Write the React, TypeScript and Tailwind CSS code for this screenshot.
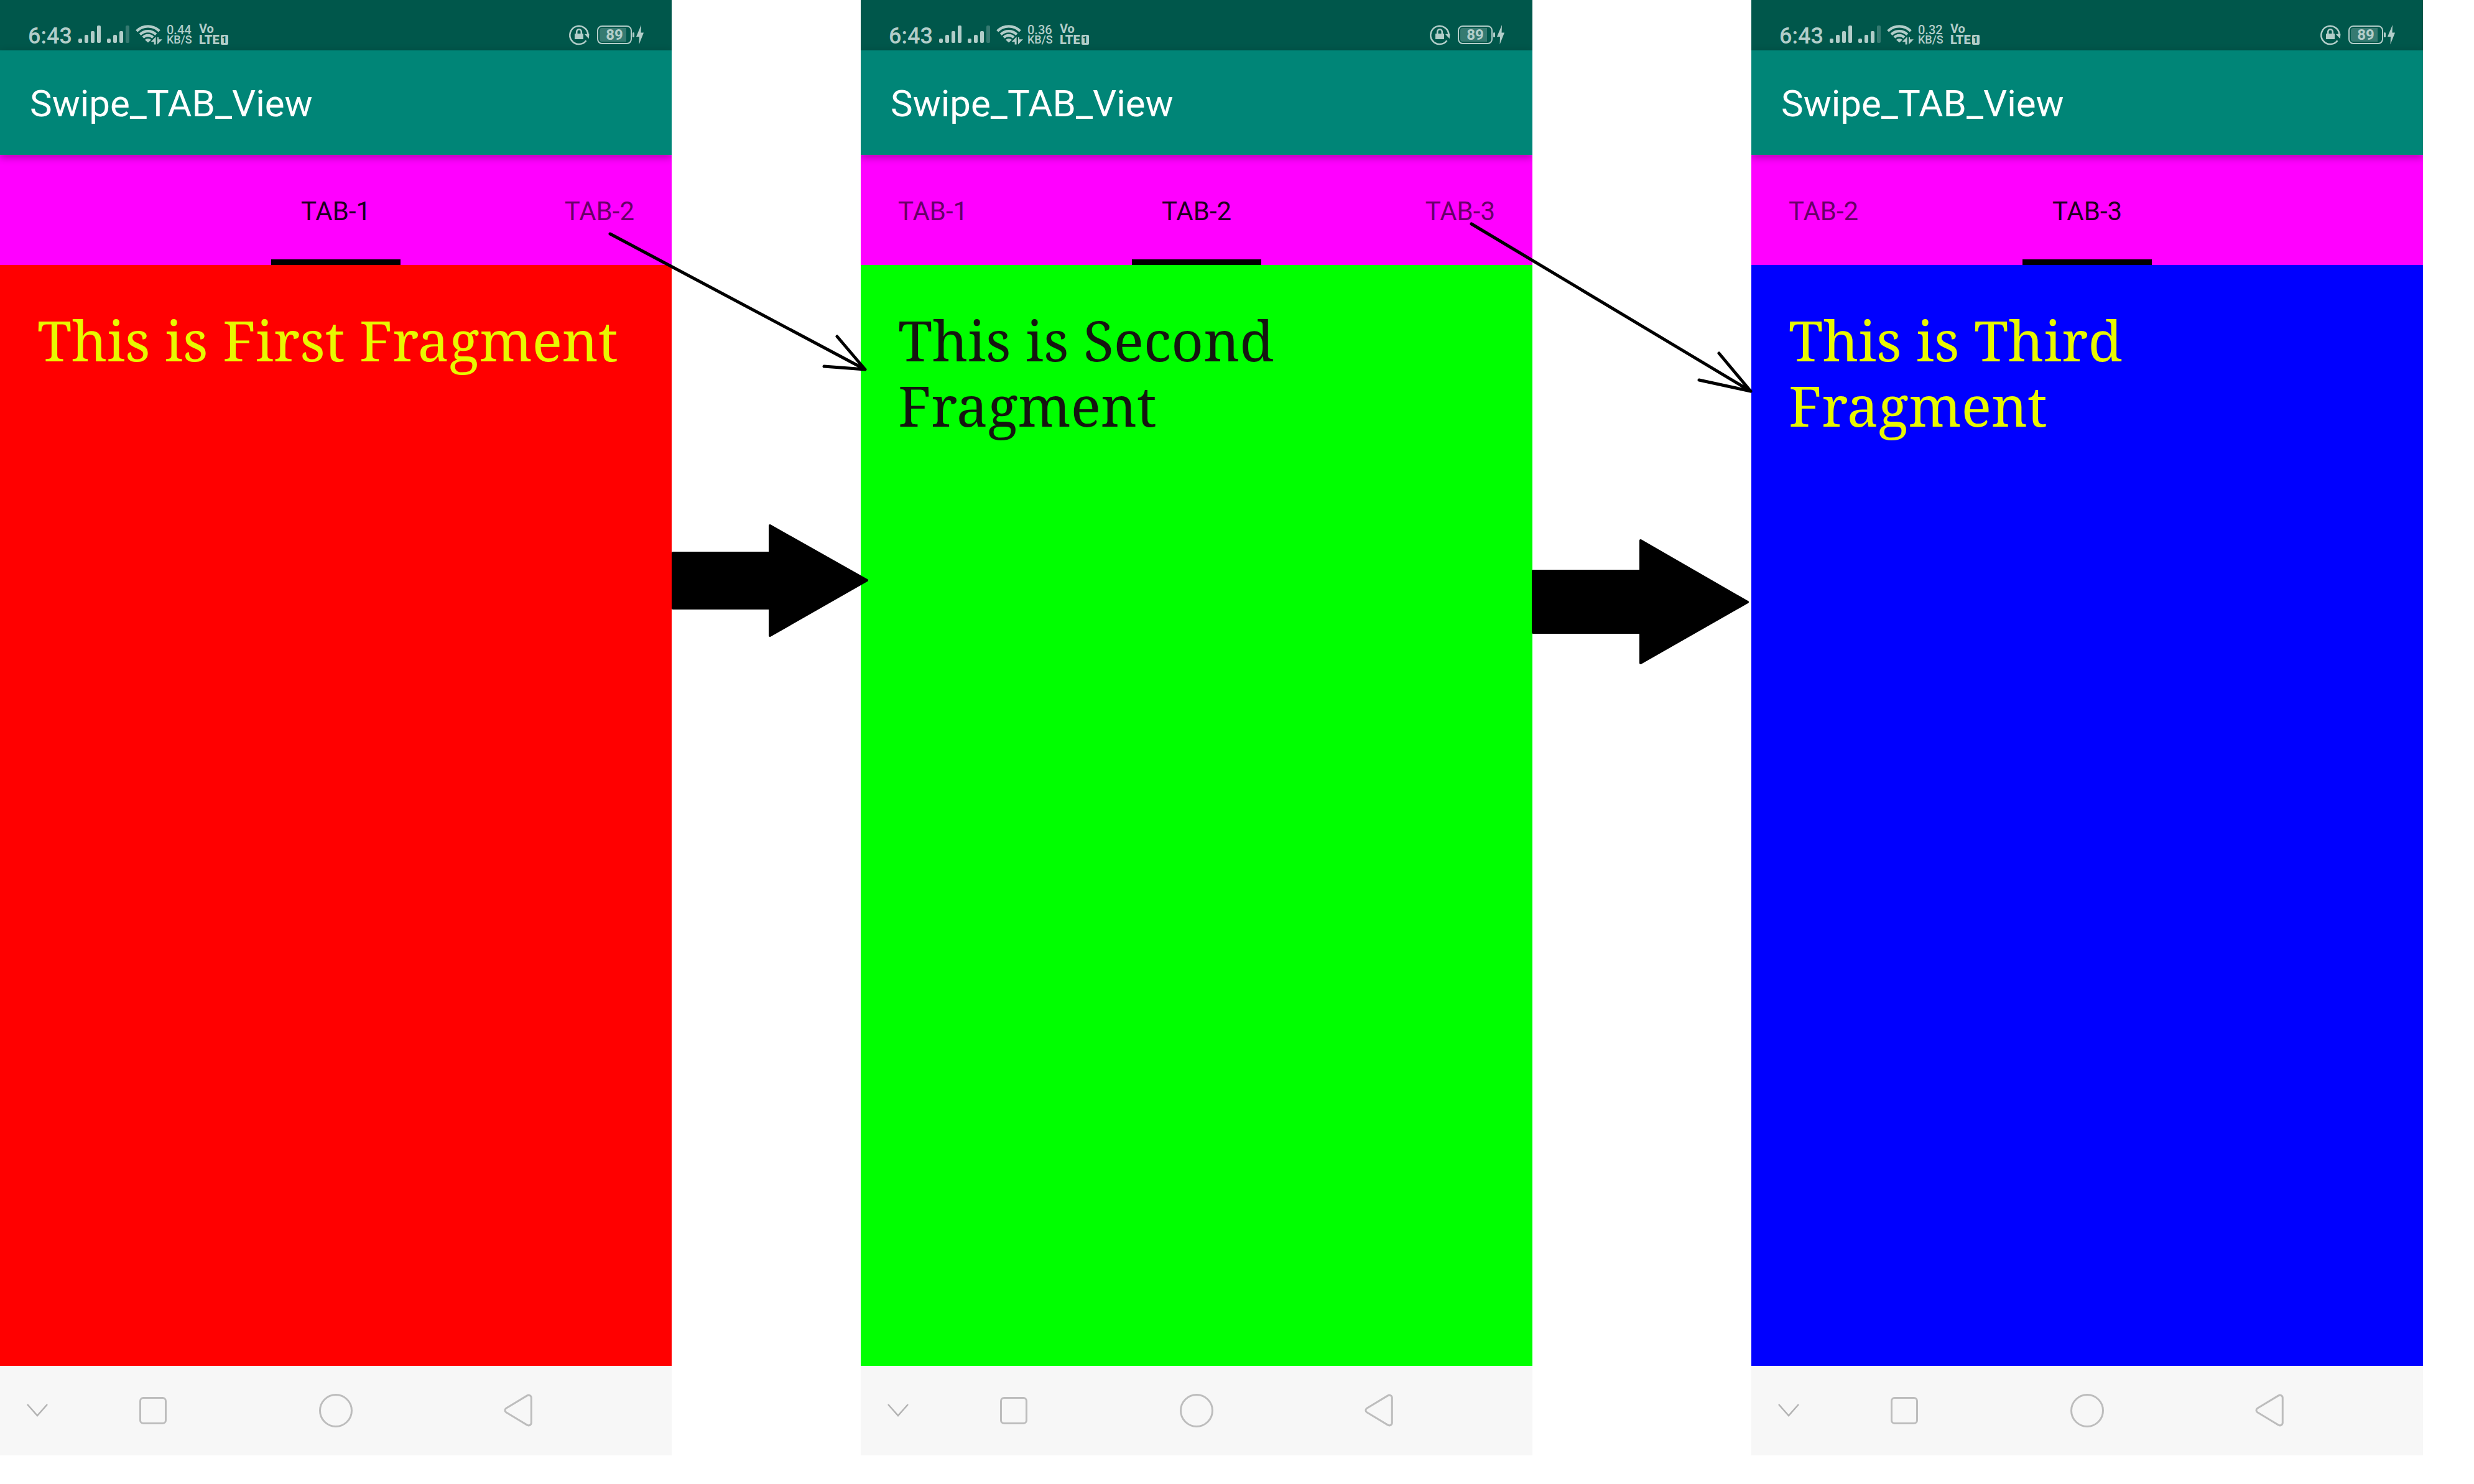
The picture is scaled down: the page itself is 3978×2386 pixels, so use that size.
import React from "react";

type Screen = {
  speed: string;
  previous?: string;
  current: string;
  next?: string;
  message: React.ReactNode;
  surface: string;
};

const screens: Screen[] = [
  {
    speed: "0.44",
    current: "TAB-1",
    next: "TAB-2",
    message: "This is First Fragment",
    surface: "bg-[#ff0000] text-[#e8f800]",
  },
  {
    speed: "0.36",
    previous: "TAB-1",
    current: "TAB-2",
    next: "TAB-3",
    message: (
      <>
        This is Second
        <br />
        Fragment
      </>
    ),
    surface: "bg-[#00ff00] text-[#151510]",
  },
  {
    speed: "0.32",
    previous: "TAB-2",
    current: "TAB-3",
    message: (
      <>
        This is Third
        <br />
        Fragment
      </>
    ),
    surface: "bg-[#0000ff] text-[#e8f800]",
  },
];

function Signals() {
  return (
    <svg className="h-8 w-[82px] shrink-0" viewBox="126 40 82 32" fill="currentColor" aria-hidden="true">
      <rect x="126" y="62" width="6" height="7" rx="2" />
      <rect x="136" y="56" width="6" height="13" rx="2" />
      <rect x="146" y="50" width="6" height="19" rx="2" />
      <rect x="156" y="41" width="6" height="28" rx="2" />
      <rect x="172" y="62" width="6" height="7" rx="2" />
      <rect x="182" y="56" width="6" height="13" rx="2" />
      <rect x="192" y="50" width="6" height="19" rx="2" />
      <rect x="202" y="41" width="6" height="28" rx="2" opacity="0.3" />
    </svg>
  );
}

function Wifi() {
  return (
    <svg className="h-8 w-11 shrink-0" viewBox="218 40 44 32" fill="none" aria-hidden="true">
      <g stroke="currentColor" strokeWidth="4.2">
        <path d="M219.7 49.9a25.8 25.8 0 0 1 36.6 0" />
        <path d="M225.2 55.4a18 18 0 0 1 25.6 0" />
        <path d="M230 60.2a11.3 11.3 0 0 1 16 0" />
      </g>
      <path d="M238 68.500l-5-4.500a7.600 7.600 0 0 1 10 0z" fill="currentColor" />
      <g fill="currentColor" stroke="#00574b" strokeWidth="2.4" paintOrder="stroke">
        <path d="M250.600 59v12.500h-3v-4.200h-5z" />
        <path d="M253 71.500v-11.500h2v3.200h6z" />
      </g>
    </svg>
  );
}

function RotationLock() {
  return (
    <svg className="mr-3 h-8 w-[33px] shrink-0 overflow-visible" viewBox="915 40 33 32" fill="none" aria-hidden="true">
      <path d="M942.500 65.300a14.600 14.600 0 1 1 3-9.500" stroke="currentColor" strokeWidth="2.6" />
      <path d="M940 55l7.500-.8-.8 8z" fill="currentColor" />
      <rect x="924" y="54" width="14" height="9" rx="0.5" fill="currentColor" />
      <path d="M927.200 55v-4a3.800 3.800 0 0 1 7.600 0v4" stroke="currentColor" strokeWidth="2.6" />
    </svg>
  );
}

function Battery() {
  return (
    <div className="flex items-center" aria-label="Battery 89 percent, charging">
      <div className="relative flex h-[30px] w-14 items-center justify-center rounded-lg border-2">
        <span className="absolute inset-y-[2px] right-[7px] left-[2px] rounded-l bg-current opacity-30" />
        <span className="relative text-2xl font-bold">89</span>
      </div>
      <span className="mx-px h-2 w-[3px] rounded-xs bg-current" />
      <svg className="ml-0.5 h-8 w-3" viewBox="0 0 12 32" fill="currentColor" aria-hidden="true">
        <path d="M8 0L0 19h5L4.500 31.500 12 12.500H7.500z" />
      </svg>
    </div>
  );
}

function StatusBar({ speed }: { speed: string }) {
  return (
    <div className="flex h-[81px] items-start bg-[#00574b] px-[45px] pt-10 text-[#b2cdc9]">
      <span className="mr-[11px] w-[70px] text-[36px] leading-9 font-medium">6:43</span>
      <div className="mr-[10px]">
        <Signals />
      </div>
      <Wifi />
      <div className="ml-1.5 flex w-[52px] flex-col font-medium">
        <span className="text-[20px] leading-4">{speed}</span>
        <span className="text-[18px] leading-4">KB/S</span>
      </div>
      <div className="flex flex-col">
        <span className="text-[20px] leading-3 font-bold">Vo</span>
        <div className="flex items-center">
          <span className="text-[20px] leading-6 font-black">LTE</span>
          <span className="ml-0.5 h-4 w-3 rounded-xs bg-[#b2cdc9] text-center text-[14px] leading-4 font-black text-[#00574b]">
            1
          </span>
        </div>
      </div>
      <div className="ml-auto flex">
        <RotationLock />
        <Battery />
      </div>
    </div>
  );
}

function Tabs({ previous, current, next }: Pick<Screen, "previous" | "current" | "next">) {
  return (
    <div role="tablist" className="grid h-[177px] grid-cols-3 bg-[#ff00ff] text-[42px]">
      <div className="flex pl-[60px]">
        {previous && (
          <button role="tab" aria-selected="false" className="pt-1 text-black/60">
            {previous}
          </button>
        )}
      </div>
      <div className="flex justify-center">
        <button
          role="tab"
          aria-selected="true"
          className="px-12 pt-1 text-black/90 shadow-[inset_0_-9px_0_#000]"
        >
          {current}
        </button>
      </div>
      <div className="flex justify-end pr-[60px]">
        {next && (
          <button role="tab" aria-selected="false" className="pt-1 text-black/60">
            {next}
          </button>
        )}
      </div>
    </div>
  );
}

function NavBar() {
  return (
    <nav className="grid h-36 grid-cols-[99fr_294fr_294fr_294fr_99fr] bg-[#f7f7f7] text-[#bdbdbd]">
      <button aria-label="Hide navigation" className="flex items-center justify-center pl-5">
        <svg className="h-6 w-9" viewBox="0 0 36 24" fill="none" stroke="#b3b3b3" strokeWidth="2.5">
          <path d="M2 2l16 18L34 2" />
        </svg>
      </button>
      <button aria-label="Recent apps" className="flex items-center justify-center">
        <svg className="size-14" viewBox="0 0 56 56" fill="none" stroke="currentColor" strokeWidth="3">
          <rect x="7.500" y="7.500" width="41" height="41" rx="5" />
        </svg>
      </button>
      <button aria-label="Home" className="flex items-center justify-center">
        <svg className="size-14" viewBox="0 0 56 56" fill="none" stroke="currentColor" strokeWidth="3">
          <circle cx="28" cy="28" r="25.500" />
        </svg>
      </button>
      <button aria-label="Back" className="flex items-center justify-center">
        <svg className="size-14" viewBox="0 0 56 56" fill="none" stroke="currentColor" strokeWidth="3">
          <path d="M7.800 24.200L41.500 3.900a4.400 4.400 0 0 1 6.800 3.600V47.500a4.400 4.400 0 0 1-6.800 3.600L7.800 30.800a3.900 3.900 0 0 1 0-6.600z" />
        </svg>
      </button>
    </nav>
  );
}

function Phone({ screen }: { screen: Screen }) {
  return (
    <section className="flex min-w-0 flex-col overflow-hidden font-['Roboto',sans-serif]">
      <StatusBar speed={screen.speed} />
      <header className="relative z-10 flex h-[168px] items-center bg-[#008577] px-12 pt-1 shadow-[0_4px_12px_rgba(0,0,0,0.32)]">
        <h1 className="text-[60px] text-white">Swipe_TAB_View</h1>
      </header>
      <Tabs previous={screen.previous} current={screen.current} next={screen.next} />
      <main className={`flex-1 px-[60px] pt-[68px] ${screen.surface}`}>
        <p className="font-['Noto_Serif',serif] text-[90px] leading-[105px]">{screen.message}</p>
      </main>
      <NavBar />
    </section>
  );
}

function FirstArrows() {
  return (
    <div className="relative z-20">
      <svg className="absolute top-0 left-0 w-full overflow-visible" viewBox="0 0 304 1100" aria-hidden="true">
        <path
          d="M-99 376L311 594M266 541L311 594L245 589"
          fill="none"
          stroke="#000"
          strokeWidth="5"
          strokeLinecap="round"
          strokeLinejoin="round"
        />
        <path d="M2 889H158V845L314 933L158 1022V978H2z" stroke="#000" strokeWidth="4" strokeLinejoin="round" />
      </svg>
    </div>
  );
}

function SecondArrows() {
  return (
    <div className="relative z-20">
      <svg className="absolute top-0 left-0 w-full overflow-visible" viewBox="0 0 352 1100" aria-hidden="true">
        <path
          d="M-98 360L351 629M300 568L351 629L268 611"
          fill="none"
          stroke="#000"
          strokeWidth="5"
          strokeLinecap="round"
          strokeLinejoin="round"
        />
        <path d="M1 918H174V869L346 968L174 1066V1017H1z" stroke="#000" strokeWidth="4" strokeLinejoin="round" />
      </svg>
    </div>
  );
}

export default function App() {
  return (
    <div className="grid min-h-screen grid-cols-[1080fr_304fr_1080fr_352fr_1080fr] bg-white pr-[82px] pb-[46px]">
      <Phone screen={screens[0]} />
      <FirstArrows />
      <Phone screen={screens[1]} />
      <SecondArrows />
      <Phone screen={screens[2]} />
    </div>
  );
}
